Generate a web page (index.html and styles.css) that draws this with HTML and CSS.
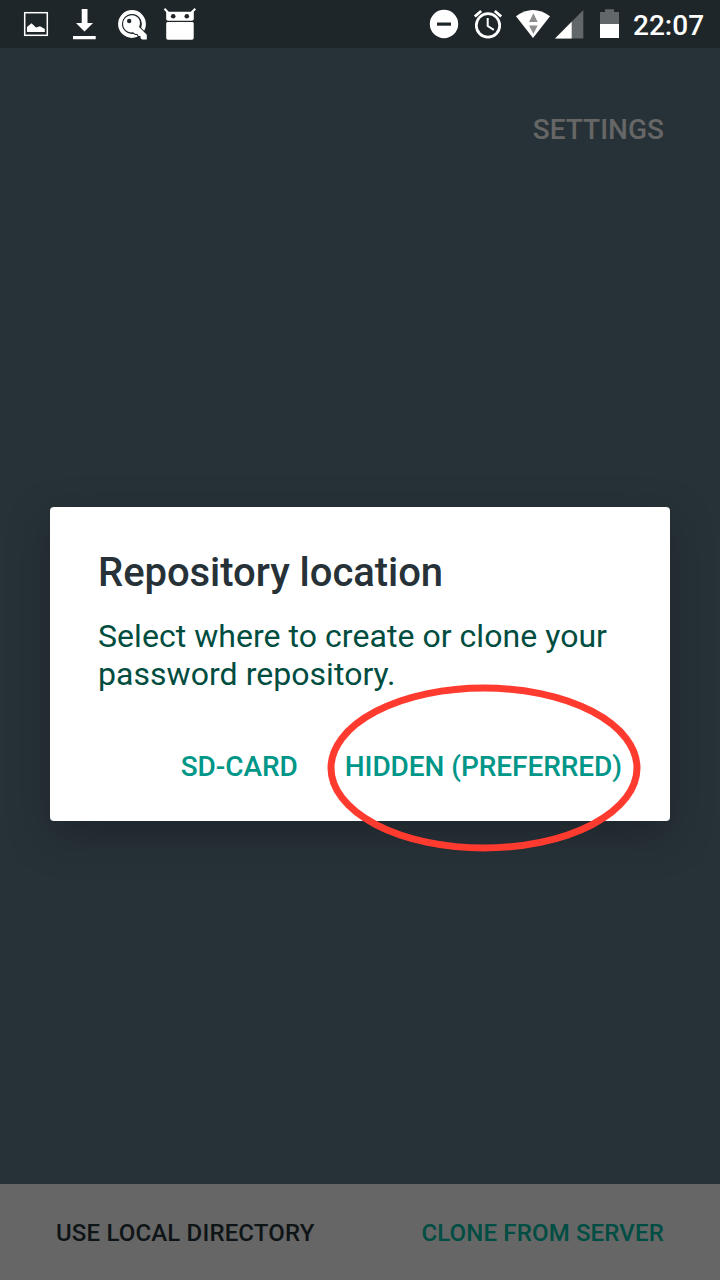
FILE: index.html
```html
<!DOCTYPE html>
<html lang="en">
<head>
<meta charset="utf-8">
<title>Repository location</title>
<link rel="stylesheet" href="styles.css">
</head>
<body>
<div class="screen">
  <header class="status-bar">
    <div class="status-group">
      <svg width="48" height="48" viewBox="12 0 48 48"><rect x="24.7" y="12.7" width="22.6" height="22.6" fill="none" stroke="#fff" stroke-width="1.5"/><path d="M27 32V27L31.5 23.2L36 27.5L40 26.2L44.8 29V32Z" fill="#fff"/></svg>
      <svg width="48" height="48" viewBox="60 0 48 48"><path d="M81.7 9H87.5V23H93L84.5 31.5L76 23H81.7ZM73 36H95.7V39.3H73Z" fill="#fff"/></svg>
      <svg width="48" height="48" viewBox="108 0 48 48"><circle cx="132" cy="24" r="11.9" fill="none" stroke="#fff" stroke-width="4"/><path d="M139.2 19.5C140.3 22 140.2 25 139 27L146.8 34.8V39.5H142L140.5 38V36H138.5L137.5 34H135.5L133 32.3C127.5 33 123.1 29 123.1 24C123.1 19 127 15.2 131.8 15.2C135 15.2 138 16.8 139.2 19.5Z" fill="#fff" stroke="#1e2629" stroke-width="2" paint-order="stroke"/><circle cx="129.2" cy="21" r="2.2" fill="#1e2629"/></svg>
      <svg width="48" height="48" viewBox="156 0 48 48"><path d="M164.5 8.7L168 12.5M195.3 8.7L191.5 12.5" stroke="#fff" stroke-width="2"/><path d="M166.2 11.8H193.8V19Q193.8 20.7 192 20.7H168Q166.2 20.7 166.2 19ZM167.5 22H192.5Q193.7 22 193.7 23.5V38Q193.7 39.8 192 39.8H168Q166.2 39.8 166.2 38V23.5Q166.2 22 167.5 22Z" fill="#fff"/><g fill="#1e2629"><circle cx="173.2" cy="16.3" r="2.3"/><circle cx="186.8" cy="16.3" r="2.3"/></g></svg>
    </div>
    <div class="status-group">
      <svg width="44" height="48" viewBox="422 0 44 48"><circle cx="444" cy="24" r="14.2" fill="#fff"/><path d="M437 22.5H451V25.7H437Z" fill="#1e2629"/></svg>
      <svg width="44" height="48" viewBox="466 0 44 48"><g fill="none" stroke="#fff"><circle cx="488" cy="25.4" r="11.7" stroke-width="2.7"/><path d="M487.7 18V26L493.8 29.8" stroke-width="2"/><path d="M474.8 16.5L481.2 11M501.2 16.5L494.8 11" stroke-width="2.8"/></g></svg>
      <svg width="42" height="48" viewBox="510 0 42 48"><path d="M516 16.2Q532.8 3.8 550 16.2L533 38Z" fill="#fff"/><path d="M529 22L533.4 13.2L537.7 22ZM529 25.5H537.7L533.4 34Z" fill="#8e8e8e"/></svg>
      <svg width="38" height="48" viewBox="552 0 38 48"><path d="M555 38.5L583.3 10V38.5Z" fill="#626769"/><path d="M555 38.5L571.7 21.7V38.5Z" fill="#fff"/></svg>
      <svg width="37" height="48" viewBox="590 0 37 48"><path d="M600 24V12H605V9.3H614V12H619V24Z" fill="#626769"/><path d="M600 24H619V38H600Z" fill="#fff"/></svg>
      <span class="clock">22:07</span>
    </div>
  </header>
  <main class="content">
    <div class="toolbar"><span class="settings">SETTINGS</span></div>
    <section class="dialog">
      <h1 class="dialog-title">Repository location</h1>
      <p class="dialog-text">Select where to create or clone your<br>password repository.</p>
      <div class="dialog-actions">
        <span class="action">SD-CARD</span>
        <span class="action preferred">HIDDEN (PREFERRED)<svg class="highlight" width="314" height="168" viewBox="0 0 314 168"><ellipse cx="157" cy="84" rx="153" ry="80" fill="none" stroke="#ff3b30" stroke-width="7"/></svg></span>
      </div>
    </section>
  </main>
  <footer class="bottom-bar"><span class="local">USE LOCAL DIRECTORY</span><span class="clone">CLONE FROM SERVER</span></footer>
</div>
</body>
</html>
```
FILE: styles.css
```css
* { box-sizing: border-box; }
body { margin: 0; font-family: Roboto, sans-serif; font-weight: 500; }
.screen { width: 720px; height: 1280px; display: flex; flex-direction: column; background: #273238; overflow: hidden; }
.status-bar { height: 48px; display: flex; justify-content: space-between; padding: 0 15px 0 12px; background: #1e2629; }
.status-group { display: flex; align-items: center; }
.status-group svg { display: block; flex: none; }
.clock { width: 78px; padding: 3px 0 0 6px; color: #fff; font-size: 28px; line-height: 33px; white-space: nowrap; }
.content { flex: 1; }
.toolbar { height: 459px; display: flex; justify-content: flex-end; padding: 66px 56px 0 0; }
.settings { color: #666; font-size: 28px; line-height: 32px; }
.dialog { width: 620px; height: 314px; margin: 0 50px; padding: 42px 48px 0; border-radius: 4px; background: #fff; box-shadow: 0 14px 40px rgba(20, 20, 28, 0.4); }
.dialog-title { margin: 0; color: #263238; font-size: 40px; line-height: 48px; font-weight: 500; letter-spacing: -0.05px; white-space: nowrap; }
.dialog-text { margin: 20px 0 0; color: #004d40; font-size: 32px; line-height: 38px; font-weight: 400; letter-spacing: 0.045px; white-space: nowrap; }
.dialog-actions { display: flex; justify-content: flex-end; gap: 47px; margin-top: 58px; color: #009688; font-size: 28px; line-height: 32px; letter-spacing: -0.06px; white-space: nowrap; }
.preferred { position: relative; }
.highlight { position: absolute; left: -18px; top: -67px; }
.bottom-bar { height: 96px; display: flex; align-items: center; justify-content: space-between; padding: 2px 56px 0; background: #666; font-size: 24px; line-height: 28px; letter-spacing: 0.16px; }
.local { color: #0f1416; }
.clone { color: #004d43; }
```
